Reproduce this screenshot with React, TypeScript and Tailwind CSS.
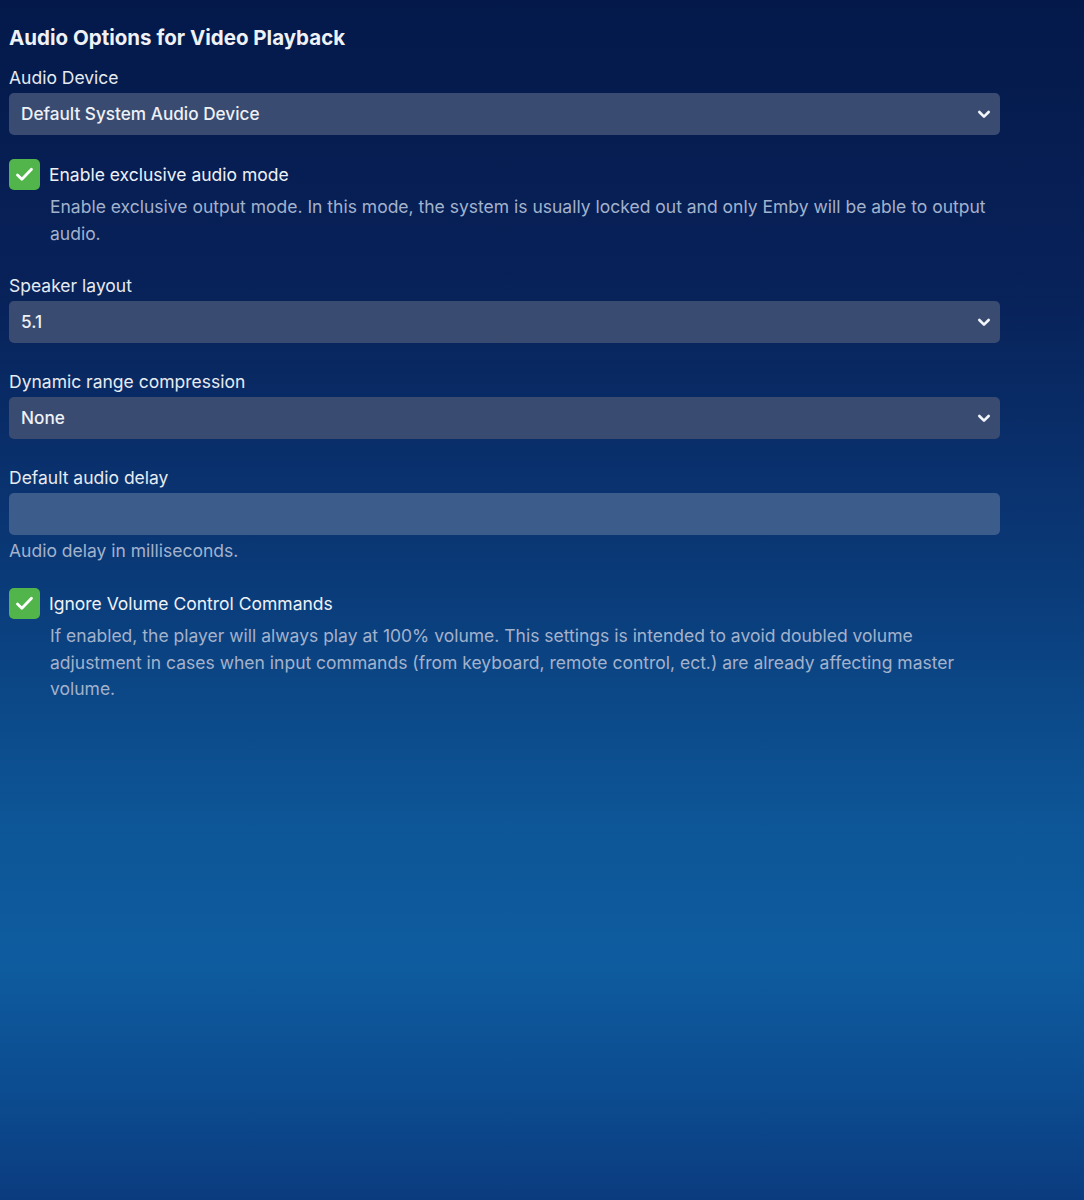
import React from "react";

function Chevron() {
  return (
    <svg width="16" height="16" viewBox="0 0 24 24" fill="none" stroke="#f1f4f8" strokeWidth="4" strokeLinecap="round" strokeLinejoin="round">
      <path d="M5 9l7 7 7-7" />
    </svg>
  );
}

function Select({ value }: { value: string }) {
  return (
    <div className="flex h-[42px] w-full items-center justify-between rounded-[5px] bg-[#3a4b71] pl-[12px] pr-[8px]">
      <span className="text-[17.2px] font-medium text-[#eef1f6]">{value}</span>
      <Chevron />
    </div>
  );
}

function Check({ label, desc }: { label: string; desc: React.ReactNode }) {
  return (
    <div className="flex flex-col">
      <div className="flex items-center gap-[9px]">
        <div className="flex h-[31px] w-[31px] items-center justify-center rounded-[5px] bg-[#52b54b]">
          <svg width="21" height="21" viewBox="0 0 24 24" fill="none" stroke="#ffffff" strokeWidth="3.2" strokeLinecap="round" strokeLinejoin="round">
            <path d="M4 12.5l5 5L20 6" />
          </svg>
        </div>
        <span className="text-[17.5px] leading-[20px] text-[#eef1f6]">{label}</span>
      </div>
      <p className="mt-[4px] pl-[41px] pr-[10px] text-[17.5px] leading-[26.5px] text-[#a3b2cc]">{desc}</p>
    </div>
  );
}

export default function App() {
  return (
    <div
      className="min-h-[1200px] w-full pl-[9px] pt-[26px] [font-family:Inter,'Noto_Sans',sans-serif]"
      style={{
        background:
          "linear-gradient(180deg, #04194a 0%, #08225a 25%, #0a3a78 48%, #0d5596 68%, #0e5c9f 80%, #0c4a8e 92%, #0b3b7f 100%)",
      }}
    >
      <div className="w-[991px]">
        <h2 className="text-[20.5px] font-bold leading-[24px] text-[#eef1f6]">Audio Options for Video Playback</h2>

        <div className="mt-[18px] text-[17.5px] leading-[20px] text-[#e6eaf1]">Audio Device</div>
        <div className="mt-[5px]">
          <Select value="Default System Audio Device" />
        </div>

        <div className="mt-[24px]">
          <Check
            label="Enable exclusive audio mode"
            desc="Enable exclusive output mode. In this mode, the system is usually locked out and only Emby will be able to output audio."
          />
        </div>

        <div className="mt-[29px] text-[17.5px] leading-[20px] text-[#e6eaf1]">Speaker layout</div>
        <div className="mt-[5px]">
          <Select value="5.1" />
        </div>

        <div className="mt-[29px] text-[17.5px] leading-[20px] text-[#e6eaf1]">Dynamic range compression</div>
        <div className="mt-[5px]">
          <Select value="None" />
        </div>

        <div className="mt-[29px] text-[17.5px] leading-[20px] text-[#e6eaf1]">Default audio delay</div>
        <div className="mt-[5px] h-[42px] w-full rounded-[5px] bg-[#3c5d8c]" />
        <div className="mt-[6px] text-[17.5px] leading-[20px] text-[#a3b2cc]">Audio delay in milliseconds.</div>

        <div className="mt-[27px]">
          <Check
            label="Ignore Volume Control Commands"
            desc="If enabled, the player will always play at 100% volume. This settings is intended to avoid doubled volume adjustment in cases when input commands (from keyboard, remote control, ect.) are already affecting master volume."
          />
        </div>
      </div>
    </div>
  );
}
